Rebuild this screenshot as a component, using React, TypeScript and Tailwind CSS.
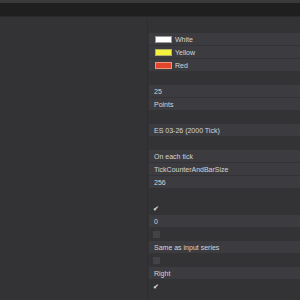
import React from 'react';

const font = { fontFamily: '"Liberation Sans", Arial, sans-serif' };

function Field({ children }: { children?: React.ReactNode }) {
  return (
    <div className="h-[13px] pb-px">
      <div className="h-[12px] bg-[#3c3c40] flex items-center pl-[5px] text-[7px] leading-none text-[#d4d4d4]">
        {children}
      </div>
    </div>
  );
}

function Empty() {
  return <div className="h-[13px]" />;
}

function ColorRow({ color, border, label }: { color: string; border: string; label: string }) {
  return (
    <div className="h-[13px] pb-px">
      <div className="h-[12px] bg-[#3c3c40] flex items-center pl-[6px] gap-[3px] text-[7px] leading-none text-[#d4d4d4]">
        <span className={`w-[17px] h-[7px] border ${border} ${color}`} />
        <span>{label}</span>
      </div>
    </div>
  );
}

function Check({ checked }: { checked?: boolean }) {
  return (
    <div className="h-[13px] flex items-center pl-[4px]">
      {checked ? (
        <span className="text-[7px] leading-none text-[#e8e8e8]">✔</span>
      ) : (
        <span className="w-[7px] h-[7px] bg-[#434347]" />
      )}
    </div>
  );
}

export default function App() {
  return (
    <div className="w-[300px] h-[300px] overflow-hidden bg-[#333336] flex flex-col" style={font}>
      <div className="h-[3px] bg-[#3a3a3a]" />
      <div className="h-[13px] bg-[#1f1f1f]" />
      <div className="h-px bg-[#2a2a2a]" />
      <div className="flex flex-1">
        <div className="w-[148px] border-r border-[#2e2e31]" />
        <div className="flex-1 pl-px flex flex-col">
          <div className="h-[16px]" />
          <ColorRow color="bg-white" border="border-[#9a9a9a]" label="White" />
          <ColorRow color="bg-[#f4f23c]" border="border-[#b0b060]" label="Yellow" />
          <ColorRow color="bg-[#e2452a]" border="border-[#e89a80]" label="Red" />
          <Empty />
          <Field>25</Field>
          <Field>Points</Field>
          <Empty />
          <Field>ES 03-26 (2000 Tick)</Field>
          <Empty />
          <Field>On each tick</Field>
          <Field>TickCounterAndBarSize</Field>
          <Field>256</Field>
          <Empty />
          <Check checked />
          <Field>0</Field>
          <Check />
          <Field>Same as input series</Field>
          <Check />
          <Field>Right</Field>
          <Check checked />
        </div>
      </div>
    </div>
  );
}
